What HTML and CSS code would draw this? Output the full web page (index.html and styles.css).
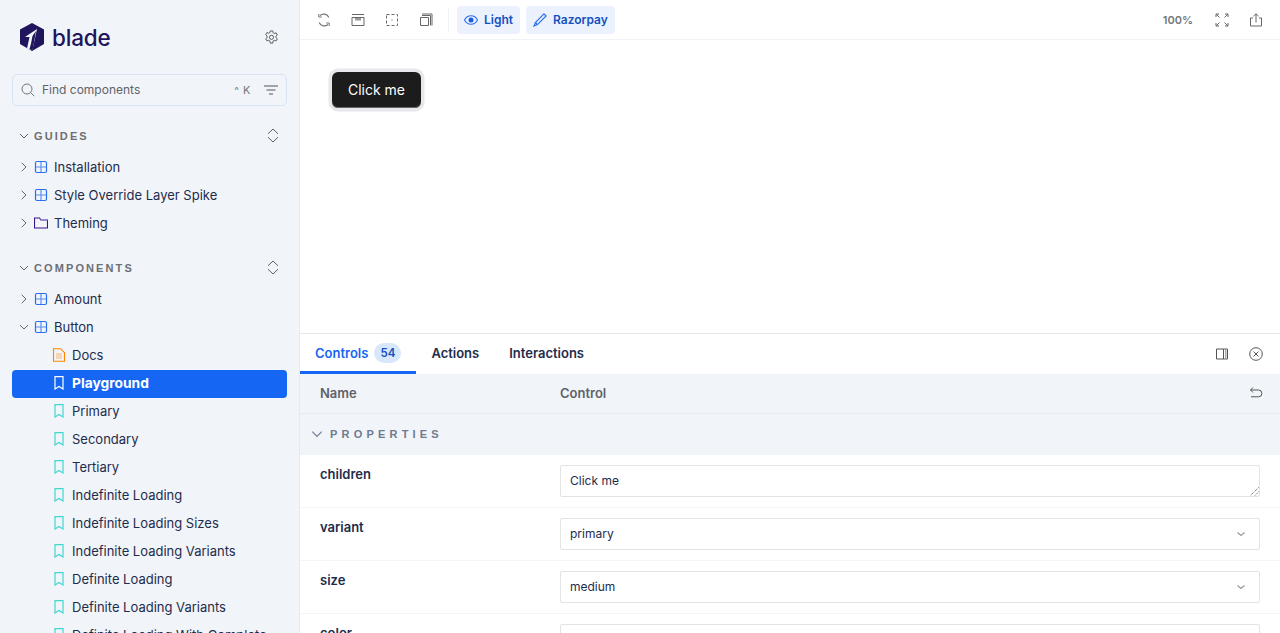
FILE: index.html
```html
<!DOCTYPE html>
<html lang="en">
<head>
    <meta charset="UTF-8">
    <meta name="viewport" content="width=device-width, initial-scale=1.0">
    <title>Button - Playground</title>
    <link rel="stylesheet" href="styles.css">
</head>
<body>
    <svg class="sprites" width="0" height="0" aria-hidden="true">
        <symbol id="i-chev-right" viewBox="0 0 12 12"><path d="M3.700 1.800 8 6 3.700 10.200" fill="none" stroke="currentColor" stroke-width="1"/></symbol>
        <symbol id="i-chev-down" viewBox="0 0 12 12"><path d="M2 4l4 4 4-4" fill="none" stroke="currentColor" stroke-width="1"/></symbol>
        <symbol id="i-expand" viewBox="0 0 14 20"><path d="M2 7.800 7 3l5 4.800M2 11.200 7 16l5-4.800" fill="none" stroke="currentColor" stroke-width="1"/></symbol>
        <symbol id="i-component" viewBox="0 0 14 14"><rect x="1.500" y="1.500" width="11" height="11" rx="1.500" fill="none" stroke="#2a6ff0" stroke-width="1.200"/><path d="M7 1.500v11M1.500 7h11" stroke="#2a6ff0" stroke-width="1.200" opacity=".75"/></symbol>
        <symbol id="i-folder" viewBox="0 0 14 14"><path d="M.5 2h5l1.500 2h6.500v8H.5z" fill="none" stroke="#37138c" stroke-width="1.100"/><path d="M6 4h7.500" stroke="#a58fd6" stroke-width="1"/></symbol>
        <symbol id="i-doc" viewBox="0 0 14 14"><path d="M1.500.7h7l4 4v8.600h-11z" fill="none" stroke="#ff8400" stroke-width="1.100"/><path d="M4 6h6M4 8h6M4 10h6" stroke="#ffb56b" stroke-width="1"/></symbol>
        <symbol id="i-bookmark" viewBox="0 0 14 14"><path d="M3 .7h8v12.300L7 10.500 3 13z" fill="none" stroke="currentColor" stroke-width="1.200"/></symbol>
    </svg>

    <div class="app">
        <aside class="sidebar">
            <div class="brand">
                <div class="logo">
                    <svg width="24" height="28" viewBox="0 0 24 28"><path d="M12 0 24 6.500V21L12 28 0 21V6.500z" fill="#20145c"/><path d="M17 6 5 14h4.500L7 25.500l4.500 1.500 1-.500z" fill="#f1f4f9"/><path d="M12.500 13 11 20.500l-1.500 5.500 3 1.500L16 8z" fill="#20145c"/></svg>
                    <span class="logo-text">blade</span>
                </div>
                <svg class="icon-gear" width="15" height="15" viewBox="0 0 16 16"><path d="M6.700 1h2.600l.4 2 1.300.7 1.900-.7 1.300 2.300-1.500 1.300v1.500l1.500 1.300-1.300 2.200-1.900-.6-1.300.7-.4 2.300H6.700l-.4-2.300-1.300-.7-1.900.6-1.300-2.200 1.500-1.300V6.300L1.800 5l1.300-2.300 1.900.7 1.300-.7z" fill="none" stroke="#555" stroke-width="1"/><circle cx="8" cy="7.800" r="2.200" fill="none" stroke="#555" stroke-width="1"/></svg>
            </div>

            <div class="search">
                <svg width="14" height="14" viewBox="0 0 14 14"><circle cx="6" cy="6" r="5" fill="none" stroke="#73777d" stroke-width="1"/><path d="m9.700 9.700 3.500 3.500" stroke="#73777d" stroke-width="1"/></svg>
                <span class="search-label">Find components</span>
                <span class="search-key"><small>^</small> K</span>
                <svg width="14" height="14" viewBox="0 0 14 14"><path d="M0 3h14M2.500 7h9M5 11h4" stroke="#555" stroke-width="1"/></svg>
            </div>

            <div class="section first">
                <svg class="chev" width="12" height="12"><use href="#i-chev-down"/></svg>
                <span class="section-title">GUIDES</span>
                <svg class="section-expand" width="14" height="20"><use href="#i-expand"/></svg>
            </div>
            <ul class="tree">
                <li class="row"><svg class="chev" width="12" height="12"><use href="#i-chev-right"/></svg><svg class="ic" width="14" height="14"><use href="#i-component"/></svg>Installation</li>
                <li class="row"><svg class="chev" width="12" height="12"><use href="#i-chev-right"/></svg><svg class="ic" width="14" height="14"><use href="#i-component"/></svg>Style Override Layer Spike</li>
                <li class="row"><svg class="chev" width="12" height="12"><use href="#i-chev-right"/></svg><svg class="ic" width="14" height="14"><use href="#i-folder"/></svg>Theming</li>
            </ul>

            <div class="section">
                <svg class="chev" width="12" height="12"><use href="#i-chev-down"/></svg>
                <span class="section-title">COMPONENTS</span>
                <svg class="section-expand" width="14" height="20"><use href="#i-expand"/></svg>
            </div>
            <ul class="tree">
                <li class="row"><svg class="chev" width="12" height="12"><use href="#i-chev-right"/></svg><svg class="ic" width="14" height="14"><use href="#i-component"/></svg>Amount</li>
                <li class="row"><svg class="chev" width="12" height="12"><use href="#i-chev-down"/></svg><svg class="ic" width="14" height="14"><use href="#i-component"/></svg>Button</li>
                <li class="row child"><svg class="ic" width="14" height="14"><use href="#i-doc"/></svg>Docs</li>
                <li class="row child active"><svg class="ic" width="14" height="14"><use href="#i-bookmark"/></svg>Playground</li>
                <li class="row child"><svg class="ic story" width="14" height="14"><use href="#i-bookmark"/></svg>Primary</li>
                <li class="row child"><svg class="ic story" width="14" height="14"><use href="#i-bookmark"/></svg>Secondary</li>
                <li class="row child"><svg class="ic story" width="14" height="14"><use href="#i-bookmark"/></svg>Tertiary</li>
                <li class="row child"><svg class="ic story" width="14" height="14"><use href="#i-bookmark"/></svg>Indefinite Loading</li>
                <li class="row child"><svg class="ic story" width="14" height="14"><use href="#i-bookmark"/></svg>Indefinite Loading Sizes</li>
                <li class="row child"><svg class="ic story" width="14" height="14"><use href="#i-bookmark"/></svg>Indefinite Loading Variants</li>
                <li class="row child"><svg class="ic story" width="14" height="14"><use href="#i-bookmark"/></svg>Definite Loading</li>
                <li class="row child"><svg class="ic story" width="14" height="14"><use href="#i-bookmark"/></svg>Definite Loading Variants</li>
                <li class="row child"><svg class="ic story" width="14" height="14"><use href="#i-bookmark"/></svg>Definite Loading With Complete</li>
            </ul>
        </aside>

        <main class="main">
            <header class="toolbar">
                <button class="tool"><svg width="14" height="14" viewBox="0 0 14 14"><path d="M11.800 4.500A5.500 5.500 0 0 0 3 2.500M2.200 9.500A5.500 5.500 0 0 0 11 11.500" fill="none" stroke="#73777d" stroke-width="1.200"/><path d="M1.800 1v3h3M12.200 13v-3h-3" fill="none" stroke="#73777d" stroke-width="1"/></svg></button>
                <button class="tool"><svg width="14" height="14" viewBox="0 0 14 14"><path d="M1 1.500h12M1 4.500h12v8H1z" fill="none" stroke="#666" stroke-width="1"/><path d="M4 5h6v2.500H4z" fill="#999"/></svg></button>
                <button class="tool"><svg width="14" height="14" viewBox="0 0 14 14"><rect x="1.500" y="1.500" width="11" height="11" fill="none" stroke="#666" stroke-width="1" stroke-dasharray="3 2"/><rect x="6.500" y="6.500" width="1" height="1" fill="#555"/></svg></button>
                <button class="tool"><svg width="14" height="14" viewBox="0 0 14 14"><path d="M1.500 4.500h8v8h-8zM3 2.500h8.500v10M3 1h10v11.500" fill="none" stroke="#666" stroke-width="1"/></svg></button>
                <span class="tool-sep"></span>
                <button class="pill">
                    <svg width="14" height="14" viewBox="0 0 14 14"><path d="M.5 7C2 4.200 4.300 2.800 7 2.800S12 4.200 13.500 7C12 9.800 9.700 11.200 7 11.200S2 9.800.5 7z" fill="none" stroke="#2a6ff0" stroke-width="1.100"/><circle cx="7" cy="7" r="2.500" fill="#1a5fd8"/></svg>
                    Light
                </button>
                <button class="pill">
                    <svg width="14" height="14" viewBox="0 0 14 14"><path d="M11 .9 13.100 3 4.500 11.600 1 13l1.400-3.500z" fill="none" stroke="#2a6ff0" stroke-width="1.200"/><path d="m2.400 9.500 2.100 2.100" stroke="#2a6ff0" stroke-width="1.200"/></svg>
                    Razorpay
                </button>
                <span class="zoom-level">100%</span>
                <button class="tool"><svg width="14" height="14" viewBox="0 0 14 14"><path d="M1 4V1h3M10 1h3v3M13 10v3h-3M4 13H1v-3M1 1l3.500 3.500M13 1 9.500 4.500M13 13 9.500 9.500M1 13l3.500-3.500" fill="none" stroke="#666" stroke-width="1"/></svg></button>
                <button class="tool"><svg width="14" height="14" viewBox="0 0 14 14"><path d="M4 5H1.500v8h11V5H10M7 9.500V1M4.500 3.200 7 .8l2.500 2.400" fill="none" stroke="#666" stroke-width="1"/></svg></button>
            </header>

            <section class="canvas">
                <button class="demo-btn">Click me</button>
            </section>

            <section class="panel">
                <nav class="tabs">
                    <a class="tab active">Controls <span class="badge">54</span></a>
                    <a class="tab">Actions</a>
                    <a class="tab">Interactions</a>
                    <span class="tabs-right">
                        <svg width="14" height="14" viewBox="0 0 14 14"><path d="M1.500 2h11v10h-11zM8.500 2v10" fill="none" stroke="#555" stroke-width="1"/><path d="M10 4h1.500M10 6h1.500M10 8h1.500M10 10h1.500" stroke="#555" stroke-width="1"/></svg>
                        <svg width="14" height="14" viewBox="0 0 14 14"><circle cx="7" cy="7" r="6.300" fill="none" stroke="#555" stroke-width="1"/><path d="m4.500 4.500 5 5m0-5-5 5" stroke="#555" stroke-width="1"/></svg>
                    </span>
                </nav>

                <div class="args-head">
                    <span>Name</span>
                    <span>Control</span>
                    <svg width="14" height="14" viewBox="0 0 14 14"><path d="M4 1.500 1.500 4 4 6.500M1.500 4h8a3.300 3.300 0 0 1 0 6.800H2" fill="none" stroke="#555" stroke-width="1"/></svg>
                </div>
                <div class="args-section">
                    <svg width="12" height="12"><use href="#i-chev-down"/></svg>
                    PROPERTIES
                </div>

                <div class="arg-row">
                    <label class="arg-name">children</label>
                    <div class="field">Click me
                        <svg class="resize" width="9" height="9" viewBox="0 0 9 9"><path d="M8.500 .5l-8 8M8.500 5l-3.500 3.500" stroke="#555" stroke-width="1" stroke-dasharray="1 1"/></svg>
                    </div>
                </div>
                <div class="arg-row">
                    <label class="arg-name">variant</label>
                    <div class="field">primary
                        <svg class="caret" width="12" height="12" viewBox="0 0 12 12"><path d="m2.500 4.500 3.500 3 3.500-3" fill="none" stroke="#999" stroke-width="1.200"/></svg>
                    </div>
                </div>
                <div class="arg-row">
                    <label class="arg-name">size</label>
                    <div class="field">medium
                        <svg class="caret" width="12" height="12" viewBox="0 0 12 12"><path d="m2.500 4.500 3.500 3 3.500-3" fill="none" stroke="#999" stroke-width="1.200"/></svg>
                    </div>
                </div>
                <div class="arg-row">
                    <label class="arg-name">color</label>
                    <div class="field"></div>
                </div>
            </section>
        </main>
    </div>
</body>
</html>
```

FILE: styles.css
```css
* {
    box-sizing: border-box;
}
html, body {
    height: 100%;
    margin: 0;
    overflow: hidden;
}
body {
    font-family: Inter, "Liberation Sans", sans-serif;
    font-size: 13px;
    color: #1e2c4c;
    background: #fff;
}
.sprites {
    position: absolute;
}
.app {
    display: flex;
    height: 633px;
}

/* sidebar */
.sidebar {
    width: 300px;
    flex: none;
    padding: 0 12px;
    background: #f1f4f9;
    border-right: 1px solid #e6e9ef;
    overflow: hidden;
}
.brand {
    display: flex;
    align-items: center;
    justify-content: space-between;
    height: 34px;
    margin-top: 20px;
    padding: 0 8px;
}
.logo {
    display: flex;
    align-items: center;
    gap: 8px;
}
.logo-text {
    font-size: 22.500px;
    font-weight: 500;
    letter-spacing: -.2px;
    color: #20145c;
}
.search {
    display: flex;
    align-items: center;
    height: 32px;
    margin-top: 20px;
    padding: 0 8px;
    border: 1px solid #d8e4f5;
    border-radius: 5px;
    font-size: 12px;
    color: #5f6369;
}
.search-label {
    flex: 1;
    margin-left: 7px;
    padding-bottom: 2px;
}
.search-key {
    margin-right: 13px;
    font-size: 11px;
    letter-spacing: .5px;
    color: #73777d;
}
.search-key small {
    font-size: 10px;
}
.section {
    display: flex;
    align-items: center;
    height: 20px;
    margin-top: 21px;
    margin-bottom: 7px;
    padding: 0 7px 0 6px;
    color: #5f6369;
}
.section.first {
    margin-top: 20px;
}
.section-title {
    flex: 1;
    margin-left: 4px;
    font-family: "Liberation Sans", sans-serif;
    font-size: 11px;
    font-weight: 700;
    letter-spacing: 2.100px;
    color: #6c6f75;
}
.tree {
    margin: 0;
    padding: 0;
    list-style: none;
}
.row {
    display: flex;
    align-items: center;
    height: 28px;
    padding-left: 6px;
    color: #1e2c4c;
    white-space: nowrap;
    border-radius: 4px;
}
.row .chev {
    flex: none;
    color: #666;
    margin-right: 4px;
}
.row .ic {
    margin-right: 6px;
    flex: none;
}
.row.child {
    padding-left: 40px;
}
.row .story {
    color: #43d6cf;
}
.row.active {
    margin-top: 1px;
    margin-bottom: -1px;
    padding-bottom: 2px;
    background: #1566f2;
    color: #fff;
    font-size: 13.800px;
    font-weight: 700;
}

/* toolbar and canvas */
.main {
    flex: 1;
    min-width: 0;
    display: flex;
    flex-direction: column;
}
.toolbar {
    display: flex;
    align-items: center;
    height: 40px;
    flex: none;
    padding: 0 17px;
    border-bottom: 1px solid #f1f2f4;
}
.tool {
    display: flex;
    padding: 0;
    border: none;
    background: none;
    margin-right: 20px;
}
.tool:last-child {
    margin-right: 0;
}
.tool-sep {
    width: 1px;
    height: 24px;
    margin-left: -5px;
    margin-right: 8px;
    background: #f1f2f4;
}
.pill {
    display: flex;
    align-items: center;
    gap: 6px;
    height: 28px;
    margin-right: 6px;
    padding: 0 7px;
    border: none;
    border-radius: 4px;
    background: #ebf2fd;
    font-family: inherit;
    font-size: 12px;
    font-weight: 600;
    color: #1550c0;
}
.zoom-level {
    margin-left: auto;
    margin-right: 22px;
    font-size: 11px;
    font-weight: 600;
    color: #73777d;
}
.canvas {
    height: 293px;
    flex: none;
    padding: 32px;
}
.demo-btn {
    display: block;
    width: 89px;
    height: 36px;
    padding: 0 0 2px;
    border: none;
    border-radius: 6px;
    background: #1c1c1c;
    box-shadow: 0 0 0 3.500px #e6e8ec, inset 0 -1px 0 #666;
    font-family: inherit;
    font-size: 14px;
    font-weight: 400;
    color: #fff;
}

/* addons panel */
.panel {
    flex: 1;
    min-height: 0;
    border-top: 1px solid #e6e8eb;
    overflow: hidden;
}
.tabs {
    display: flex;
    align-items: center;
    height: 40px;
}
.tab {
    display: flex;
    align-items: center;
    gap: 6px;
    height: 40px;
    padding: 0 15px 3px;
    font-size: 13px;
    font-weight: 600;
}
.tab.active {
    color: #1566f2;
    border-bottom: 3px solid #1566f2;
    padding-bottom: 0;
}
.badge {
    width: 27px;
    height: 20px;
    line-height: 20px;
    border-radius: 10px;
    background: #d9e7fc;
    font-size: 11.500px;
    text-align: center;
    color: #1550c0;
}
.tabs-right {
    display: flex;
    gap: 20px;
    margin-left: auto;
    padding-right: 17px;
}
.args-head {
    display: grid;
    grid-template-columns: 240px 1fr 14px;
    align-items: center;
    height: 40px;
    padding: 0 17px 2px 20px;
    background: #f1f4f9;
    border-bottom: 1px solid #e8ebf0;
    font-size: 13px;
    font-weight: 600;
    color: #5f6369;
}
.args-section {
    display: flex;
    align-items: center;
    gap: 8px;
    height: 41px;
    padding: 0 0 2px 10px;
    background: #f1f4f9;
    font-family: "Liberation Sans", sans-serif;
    font-size: 11px;
    font-weight: 700;
    letter-spacing: 4.200px;
    color: #6f7c90;
}
.args-section svg {
    width: 14px;
    height: 14px;
    margin-right: -2px;
}
.arg-row {
    display: grid;
    grid-template-columns: 240px 1fr;
    height: 53px;
    padding: 10px 20px;
    border-bottom: 1px solid #f4f5f7;
}
.arg-name {
    font-size: 13px;
    font-weight: 600;
    line-height: 18px;
}
.field {
    position: relative;
    display: flex;
    align-items: center;
    height: 32px;
    padding: 0 9px 1px;
    border: 1px solid #e2e3e5;
    border-radius: 2px;
    font-size: 12px;
    color: #1e2c4c;
}
.resize {
    position: absolute;
    right: 0;
    bottom: 0;
}
.caret {
    position: absolute;
    right: 12px;
    top: 9px;
}
```
